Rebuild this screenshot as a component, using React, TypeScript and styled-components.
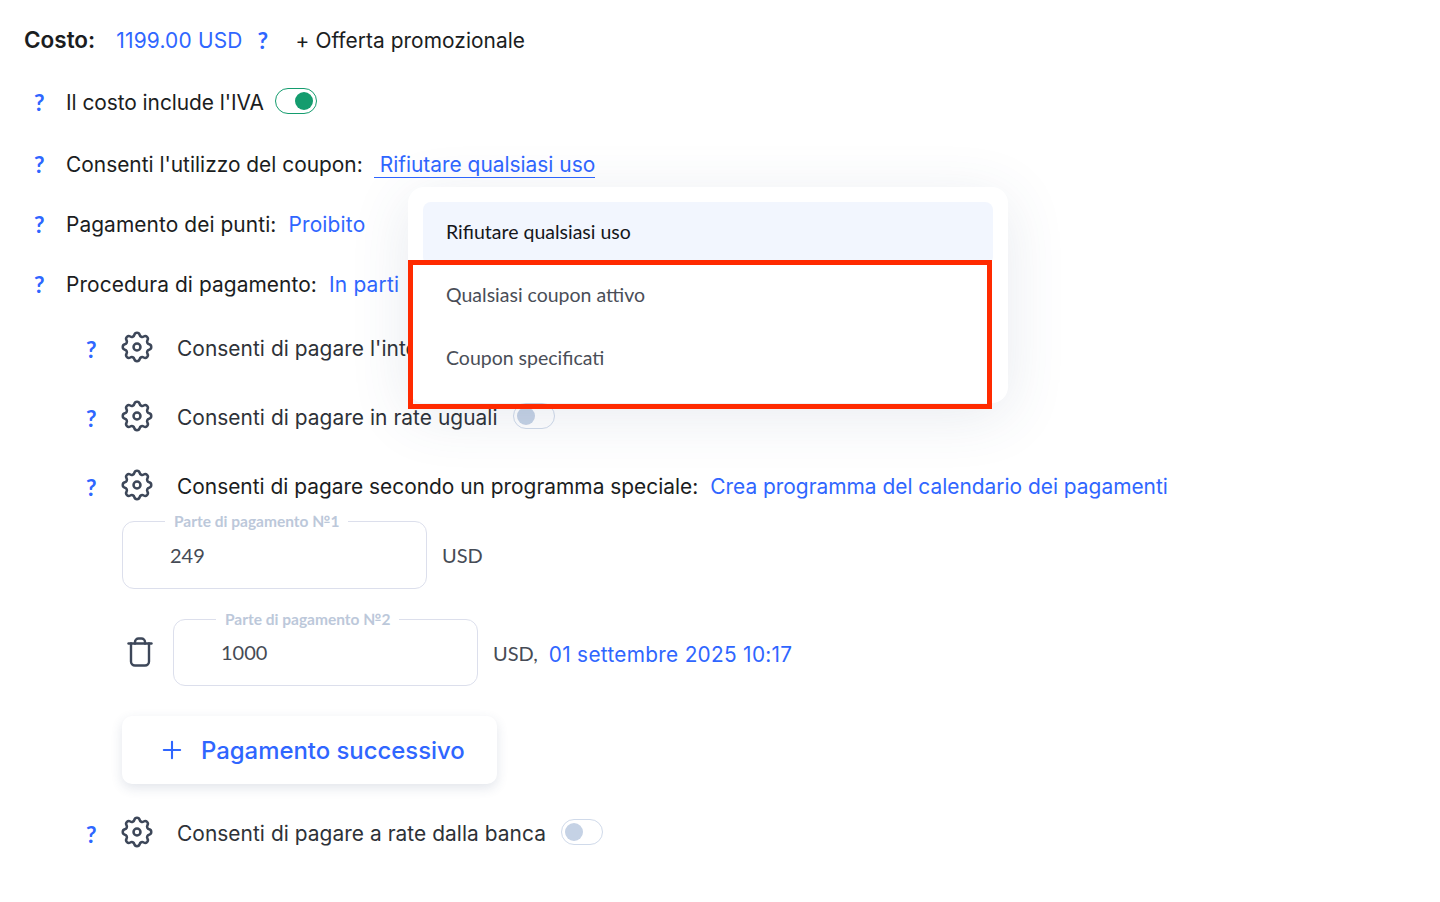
import React from "react";
import styled, { createGlobalStyle } from "styled-components";
import { Plus } from "lucide-react";

const BLUE = "#2f66ff";

const GlobalStyle = createGlobalStyle`
  html, body {
    margin: 0;
    padding: 0;
    background: #fff;
  }
  body {
    font-family: Inter, "Liberation Sans", sans-serif;
    color: #1b1d21;
  }
`;

const Page = styled.div`
  position: relative;
  width: 1440px;
  height: 902px;
  overflow: hidden;
  padding: 20px 0 0 24px;
  box-sizing: border-box;
`;

const Row = styled.div<{ $top?: number }>`
  display: flex;
  align-items: center;
  height: 40px;
  margin-top: ${({ $top }) => $top ?? 0}px;
  font-size: 20.9px;
  white-space: nowrap;
`;

const CostLabel = styled.span`
  font-size: 22.5px;
  font-weight: 600;
  margin: -2px 21px 0 0;
`;

const Help = styled.a`
  color: ${BLUE};
  font-family: Lato, "Liberation Sans", sans-serif;
  font-weight: 700;
  font-size: 23px;
  width: 10px;
  flex: none;
`;

const CostHelp = styled(Help)`
  margin-left: 15px;
`;

const TopHelp = styled(Help)`
  margin-left: 10px;
  margin-right: 22px;
`;

const SubHelp = styled(Help)`
  margin: 2px 26px 0 62px;
`;

const Link = styled.a<{ $left?: number; $spaced?: boolean }>`
  color: ${BLUE};
  margin-left: ${({ $left }) => $left ?? 0}px;
  letter-spacing: ${({ $spaced }) => ($spaced ? "0.2px" : "normal")};
`;

const ActiveLink = styled(Link)`
  padding: 0 0 0 6px;
  margin: 2px 0 0 11px;
  line-height: 25px;
  border-bottom: 1px solid ${BLUE};
`;

const Promo = styled.span`
  margin-left: 28px;
  letter-spacing: 0.05px;
`;

const ToggleCaption = styled.span`
  margin-right: 11px;
  letter-spacing: -0.05px;
`;

const Caption = styled.span`
  letter-spacing: 0.08px;
`;

const Text = styled.span<{ $muted?: boolean }>`
  color: ${({ $muted }) => ($muted ? "#2e3238" : "#1b1d21")};
  margin-left: 25px;
  margin-right: ${({ $muted }) => ($muted ? 15 : 12)}px;
  letter-spacing: ${({ $muted }) => ($muted ? "0.05px" : "normal")};
`;

const GearIcon = styled.svg`
  flex: none;
  width: 38px;
  height: 38px;
  margin: -2px -4px 0;
  color: #3d4759;
`;

const Toggle = styled.span<{ $on?: boolean }>`
  display: flex;
  align-items: center;
  justify-content: ${({ $on }) => ($on ? "flex-end" : "flex-start")};
  box-sizing: border-box;
  width: 42px;
  height: 26px;
  padding: 0 3px;
  border-radius: 13px;
  border: 1px solid ${({ $on }) => ($on ? "#149c6e" : "#d0daea")};
  margin-top: -2px;

  &::after {
    content: "";
    width: 18px;
    height: 18px;
    border-radius: 50%;
    background: ${({ $on }) => ($on ? "#149c6e" : "#c5d2e5")};
  }
`;

const FieldRow = styled.div<{ $top: number; $indent?: number }>`
  display: flex;
  align-items: center;
  margin-top: ${({ $top }) => $top}px;
  margin-left: ${({ $indent }) => $indent ?? 98}px;
  font-family: Lato, "Liberation Sans", sans-serif;
  font-size: 20px;
  color: #464b55;
`;

const Field = styled.fieldset<{ $tall?: boolean }>`
  box-sizing: border-box;
  width: 305px;
  height: ${({ $tall }) => ($tall ? 77 : 76)}px;
  margin: -9px 0 0;
  padding: ${({ $tall }) => ($tall ? 1 : 0)}px 0 0 47px;
  border: 1px solid #dcdfec;
  border-radius: 12px;
`;

const FieldLegend = styled.legend`
  margin-left: -5px;
  padding: 0 9px;
  font-size: 15.5px;
  font-weight: 700;
  line-height: 18px;
  color: #bcc8da;
`;

const FieldValue = styled.div`
  margin-top: 8px;
  line-height: 32px;
  color: #464b55;
`;

const Unit = styled.span`
  margin-left: 15px;
`;

const DateLink = styled(Link)`
  margin-top: 3px;
  font-family: Inter, "Liberation Sans", sans-serif;
  font-size: 20.8px;
  letter-spacing: 0.3px;
`;

const Trash = styled.svg`
  flex: none;
  width: 26px;
  height: 32px;
  margin-right: 20px;
  margin-top: -1px;
  color: #3d4759;
`;

const AddButton = styled.button`
  display: flex;
  align-items: center;
  box-sizing: border-box;
  width: 375px;
  height: 68px;
  margin: 30px 0 0 98px;
  padding: 0 0 0 36px;
  border: 0;
  border-radius: 10px;
  background: #fff;
  box-shadow: 0 4px 12px rgba(50, 70, 110, 0.14);
  color: ${BLUE};
  font-family: Inter, "Liberation Sans", sans-serif;
  font-size: 23.9px;
  font-weight: 500;
`;

const AddIcon = styled(Plus)`
  width: 28px;
  height: 28px;
  margin-right: 15px;
`;

const Menu = styled.div`
  position: absolute;
  left: 408px;
  top: 187px;
  box-sizing: border-box;
  width: 600px;
  height: 216px;
  padding: 15px;
  border-radius: 16px;
  background: #fff;
  box-shadow: 0 12px 60px rgba(60, 80, 120, 0.12);
  font-family: Lato, "Liberation Sans", sans-serif;
  font-size: 19.5px;
`;

const MenuItem = styled.div<{ $active?: boolean }>`
  display: flex;
  align-items: center;
  height: 63px;
  padding: 0 0 4px 23px;
  box-sizing: border-box;
  border-radius: 8px;
  background: ${({ $active }) => ($active ? "#f2f6fe" : "transparent")};
  color: ${({ $active }) => ($active ? "#15171b" : "#4a4e57")};
`;

const Highlight = styled.div`
  position: absolute;
  left: 408px;
  top: 260px;
  box-sizing: border-box;
  width: 584px;
  height: 149px;
  border: 5px solid #ff2a00;
`;

const Gear = () => (
  <GearIcon viewBox="0 0 24 24" fill="none" stroke="currentColor" strokeWidth="1.6" strokeLinecap="round" strokeLinejoin="round">
    <path d="M10.325 4.317c.426 -1.756 2.924 -1.756 3.350 0a1.724 1.724 0 0 0 2.573 1.066c1.543 -.94 3.310 .826 2.370 2.370a1.724 1.724 0 0 0 1.065 2.572c1.756 .426 1.756 2.924 0 3.350a1.724 1.724 0 0 0 -1.066 2.573c.94 1.543 -.826 3.310 -2.370 2.370a1.724 1.724 0 0 0 -2.572 1.065c-.426 1.756 -2.924 1.756 -3.350 0a1.724 1.724 0 0 0 -2.573 -1.066c-1.543 .94 -3.310 -.826 -2.370 -2.370a1.724 1.724 0 0 0 -1.065 -2.572c-1.756 -.426 -1.756 -2.924 0 -3.350a1.724 1.724 0 0 0 1.066 -2.573c-.94 -1.543 .826 -3.310 2.370 -2.370c1 .608 2.296 .07 2.572 -1.065z" />
    <circle cx="12" cy="12" r="2.200" />
  </GearIcon>
);

const TrashIcon = () => (
  <Trash viewBox="0 0 26 32" fill="none" stroke="currentColor" strokeWidth="2.4" strokeLinecap="round" strokeLinejoin="round">
    <path d="M1.500 7.500h23" />
    <path d="M4 7.500v18a4 4 0 0 0 4 4h10a4 4 0 0 0 4-4v-18" />
    <path d="M8 7.500v-1.500a3.500 3.500 0 0 1 3.500-3.500h3a3.500 3.500 0 0 1 3.500 3.500v1.500" />
  </Trash>
);

export default function App() {
  return (
    <Page>
      <GlobalStyle />
      <Row>
        <CostLabel>Costo:</CostLabel>
        <Link $spaced>1199.00 USD</Link>
        <CostHelp>?</CostHelp>
        <Promo>+ Offerta promozionale</Promo>
      </Row>
      <Row $top={22}>
        <TopHelp>?</TopHelp>
        <ToggleCaption>Il costo include l'IVA</ToggleCaption>
        <Toggle $on />
      </Row>
      <Row $top={22}>
        <TopHelp>?</TopHelp>
        <span>Consenti l'utilizzo del coupon:</span>
        <ActiveLink>Rifiutare qualsiasi uso</ActiveLink>
      </Row>
      <Row $top={20}>
        <TopHelp>?</TopHelp>
        <Caption>Pagamento dei punti:</Caption>
        <Link $left={12} $spaced>Proibito</Link>
      </Row>
      <Row $top={20}>
        <TopHelp>?</TopHelp>
        <Caption>Procedura di pagamento:</Caption>
        <Link $left={12} $spaced>In parti</Link>
      </Row>
      <Row $top={24}>
        <SubHelp>?</SubHelp>
        <Gear />
        <Text $muted>Consenti di pagare l'intero importo</Text>
      </Row>
      <Row $top={29}>
        <SubHelp>?</SubHelp>
        <Gear />
        <Text $muted>Consenti di pagare in rate uguali</Text>
        <Toggle />
      </Row>
      <Row $top={29}>
        <SubHelp>?</SubHelp>
        <Gear />
        <Text>Consenti di pagare secondo un programma speciale:</Text>
        <Link>Crea programma del calendario dei pagamenti</Link>
      </Row>
      <FieldRow $top={15}>
        <Field $tall>
          <FieldLegend>Parte di pagamento №1</FieldLegend>
          <FieldValue>249</FieldValue>
        </Field>
        <Unit>USD</Unit>
      </FieldRow>
      <FieldRow $top={30} $indent={103}>
        <TrashIcon />
        <Field>
          <FieldLegend>Parte di pagamento №2</FieldLegend>
          <FieldValue>1000</FieldValue>
        </Field>
        <Unit>USD,</Unit>
        <DateLink $left={11}>01 settembre 2025 10:17</DateLink>
      </FieldRow>
      <AddButton>
        <AddIcon strokeWidth={1.8} />
        Pagamento successivo
      </AddButton>
      <Row $top={29}>
        <SubHelp>?</SubHelp>
        <Gear />
        <Text $muted>Consenti di pagare a rate dalla banca</Text>
        <Toggle />
      </Row>
      <Menu>
        <MenuItem $active>Rifiutare qualsiasi uso</MenuItem>
        <MenuItem>Qualsiasi coupon attivo</MenuItem>
        <MenuItem>Coupon specificati</MenuItem>
      </Menu>
      <Highlight />
    </Page>
  );
}
